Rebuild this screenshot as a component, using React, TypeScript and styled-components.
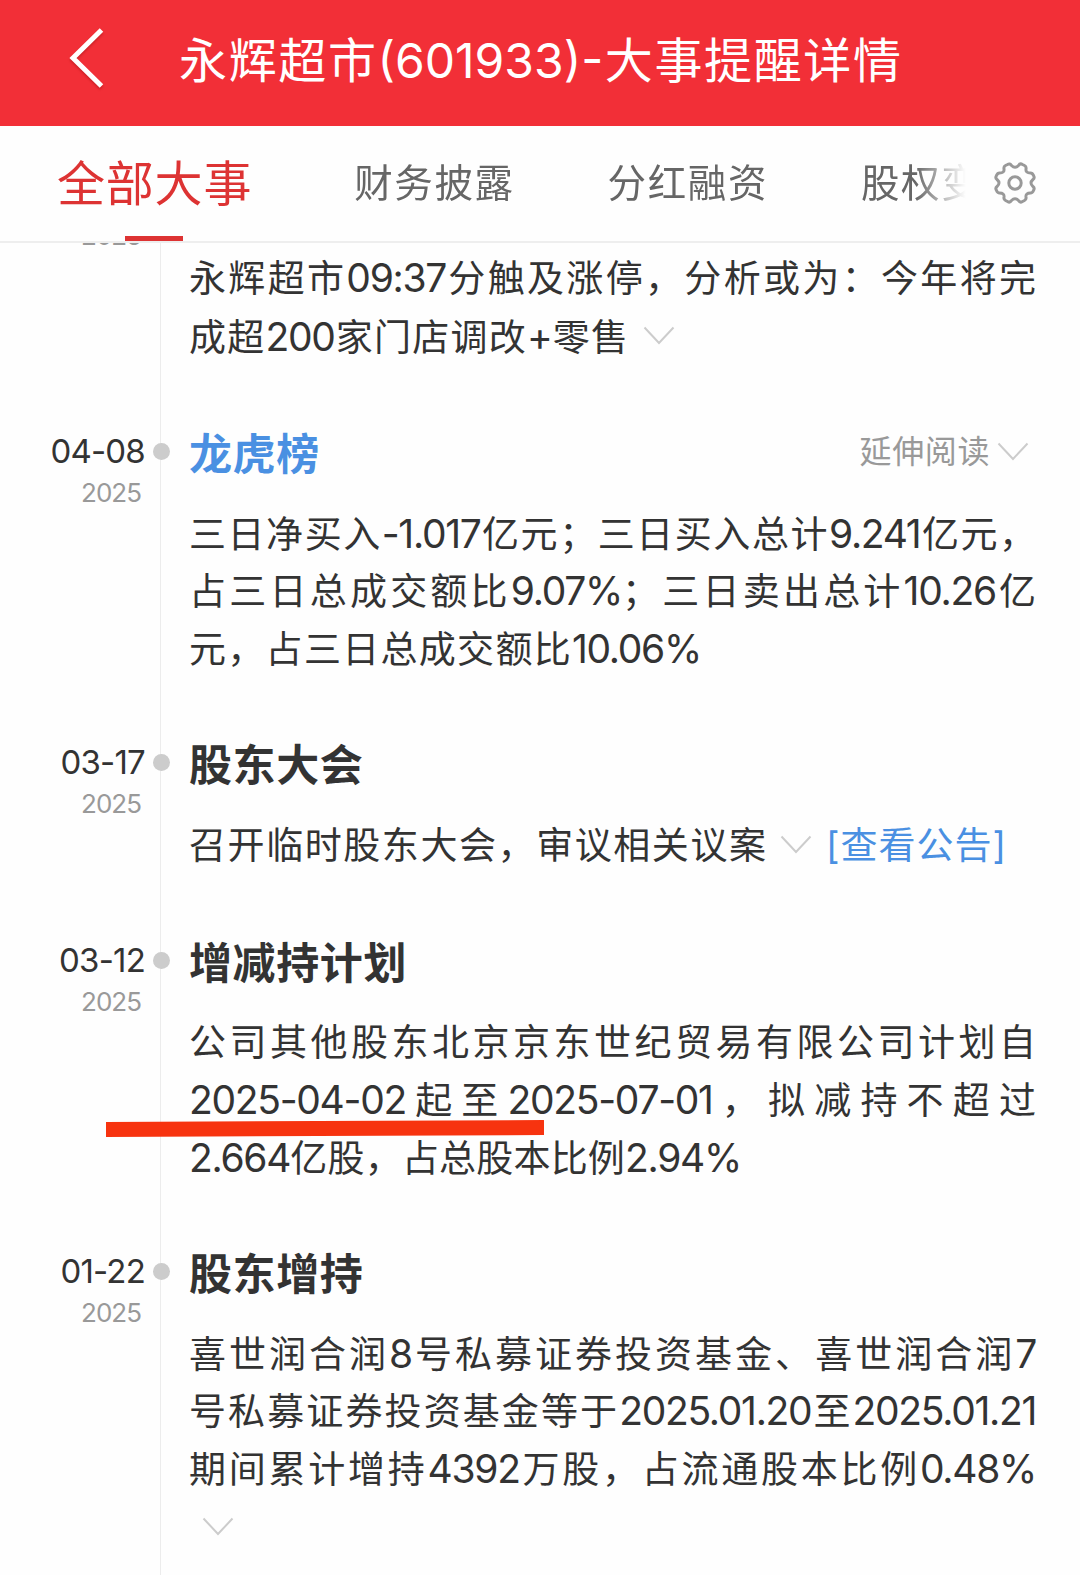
import React from "react";
import styled, { createGlobalStyle } from "styled-components";

const GlobalStyle = createGlobalStyle`
  * { box-sizing: border-box; }
  body { margin: 0; background: #fefefe; }
`;

const Screen = styled.div`
  width: 1080px;
  height: 1575px;
  display: flex;
  flex-direction: column;
  overflow: hidden;
  position: relative;
  background: #fefefe;
  color: #333;
  font-family: "Inter", "Noto Sans CJK SC", sans-serif;
`;

const Header = styled.header`
  height: 126px;
  flex: none;
  display: flex;
  align-items: center;
  padding: 0 0 8px 69px;
  background: #f22f37;
  color: #fff;
`;

const BackIcon = styled.svg`
  width: 36px;
  height: 62px;
  flex: none;
  margin-top: -3px;
  filter: drop-shadow(0 2px 1px rgba(120, 0, 0, 0.3));
`;

const HeaderTitle = styled.h1`
  margin: 4px 0 0 74px;
  width: 722px;
  font-size: 48px;
  font-weight: 400;
  line-height: 70px;
  white-space: nowrap;
  text-align-last: justify;
`;

const TabBar = styled.nav`
  height: 117px;
  flex: none;
  display: flex;
  align-items: stretch;
  border-bottom: 2px solid #eee;
`;

const TabStrip = styled.div`
  width: 966px;
  padding-left: 57px;
  display: flex;
  overflow: hidden;
  mask-image: linear-gradient(to right, #000 915px, transparent 966px);
`;

const Tab = styled.div<{ $active?: boolean; $gap: number }>`
  flex: none;
  display: flex;
  flex-direction: column;
  align-items: center;
  margin-right: ${(p) => p.$gap}px;
  font-size: ${(p) => (p.$active ? 48 : 38.5)}px;
  letter-spacing: ${(p) => (p.$active ? 0.8 : 1.6)}px;
  line-height: ${(p) => (p.$active ? 116 : 114)}px;
  color: ${(p) => (p.$active ? "#dd3333" : "#666")};
`;

const TabUnderline = styled.span`
  width: 58px;
  height: 5px;
  margin: -6px 2px 0 0;
  background: #dd3333;
`;

const SettingsIcon = styled.svg`
  width: 44px;
  height: 44px;
  margin: 35px 0 0 27px;
`;

const Timeline = styled.main`
  flex: 1;
  min-height: 0;
  overflow: hidden;
  display: flex;
  flex-direction: column;
`;

const Entry = styled.section`
  flex: none;
  display: grid;
  grid-template-columns: 145px 32px 1fr;

  &:last-child {
    flex: 1;
  }
`;

const DateColumn = styled.div<{ $shift?: number }>`
  display: flex;
  flex-direction: column;
  align-items: flex-end;
  margin-top: ${(p) => p.$shift ?? -1}px;
`;

const Day = styled.div`
  height: 56px;
  line-height: 56px;
  font-size: 33px;
  letter-spacing: -0.8px;
  white-space: nowrap;
`;

const Year = styled.div`
  height: 28px;
  line-height: 28px;
  padding-right: 4px;
  font-size: 26px;
  letter-spacing: -1px;
  color: #999;
`;

const Axis = styled.div`
  display: flex;
  justify-content: center;
  padding-top: 19px;
  background: linear-gradient(#ececec, #ececec) 15px 0 / 1px 100% no-repeat;
`;

const Dot = styled.span`
  width: 17px;
  height: 17px;
  border-radius: 50%;
  background: #ccc;
`;

const Body = styled.div<{ $first?: boolean }>`
  padding: ${(p) => (p.$first ? 5 : 0)}px 44px 58px 12px;
`;

const TitleRow = styled.div`
  height: 60px;
  margin-bottom: 20px;
  display: flex;
  align-items: center;
  justify-content: space-between;
`;

const Title = styled.h2<{ $link?: boolean }>`
  margin: 0;
  padding-top: 1px;
  font-size: 43px;
  font-weight: 700;
  letter-spacing: 0.6px;
  line-height: 60px;
  color: ${(p) => (p.$link ? "#4a90e2" : "#333")};
`;

const ReadMore = styled.div`
  display: flex;
  align-items: center;
  gap: 7px;
  padding: 0 7px 4px 0;
  font-size: 32px;
  letter-spacing: 0.6px;
  line-height: 54px;
  color: #999;
`;

const LineRow = styled.div<{ $tall?: boolean }>`
  height: ${(p) => (p.$tall ? 60 : 57.7)}px;
  display: flex;
  align-items: center;
`;

const LineText = styled.span<{ $width?: number }>`
  display: block;
  width: ${(p) => p.$width ?? 847}px;
  padding-top: 2px;
  font-size: 37px;
  line-height: 57px;
  white-space: nowrap;
  text-align: justify;
  text-align-last: justify;
`;

const Num = styled.span`
  font-size: 39px;
  letter-spacing: -1.3px;
`;

const NoticeLink = styled.span`
  margin-left: 14px;
  padding-top: 2px;
  font-size: 37px;
  line-height: 57px;
  letter-spacing: 1px;
  white-space: nowrap;
  color: #4a90e2;
`;

const ChevronIcon = styled.svg<{ $indent?: number }>`
  width: 32px;
  height: 20px;
  flex: none;
  margin-left: ${(p) => p.$indent ?? 0}px;
`;

const MarkerStroke = styled.div`
  position: absolute;
  left: 106px;
  top: 1121px;
  width: 438px;
  height: 15px;
  background: #f7330f;
  transform: rotate(-0.25deg);
`;

function Chevron({ indent }: { indent?: number }) {
  return (
    <ChevronIcon $indent={indent} viewBox="0 0 32 20">
      <path d="M1.5 1.5 L16 17 L30.5 1.5" fill="none" stroke="#ccc" strokeWidth="2" />
    </ChevronIcon>
  );
}

interface LineData {
  text: string;
  width?: number;
  chevron?: number;
  link?: string;
}

interface EntryData {
  day: string;
  title: string;
  isLink?: boolean;
  readMore?: boolean;
  lines: LineData[];
}

const headLines: LineData[] = [
  { text: "永辉超市09:37分触及涨停，分析或为：今年将完" },
  { text: "成超200家门店调改+零售", width: 439, chevron: 15 },
];

const entries: EntryData[] = [
  {
    day: "04-08",
    title: "龙虎榜",
    isLink: true,
    readMore: true,
    lines: [
      { text: "三日净买入-1.017亿元；三日买入总计9.241亿元，" },
      { text: "占三日总成交额比9.07%；三日卖出总计10.26亿" },
      { text: "元，占三日总成交额比10.06%", width: 512 },
    ],
  },
  {
    day: "03-17",
    title: "股东大会",
    lines: [
      { text: "召开临时股东大会，审议相关议案", width: 577, chevron: 14, link: "[查看公告]" },
    ],
  },
  {
    day: "03-12",
    title: "增减持计划",
    lines: [
      { text: "公司其他股东北京京东世纪贸易有限公司计划自" },
      { text: "2025-04-02起至2025-07-01，拟减持不超过" },
      { text: "2.664亿股，占总股本比例2.94%", width: 552 },
    ],
  },
  {
    day: "01-22",
    title: "股东增持",
    lines: [
      { text: "喜世润合润8号私募证券投资基金、喜世润合润7" },
      { text: "号私募证券投资基金等于2025.01.20至2025.01.21" },
      { text: "期间累计增持4392万股，占流通股本比例0.48%" },
      { text: "", width: 0, chevron: 13 },
    ],
  },
];

function Line({ line }: { line: LineData }) {
  const parts = line.text.split(/([0-9.:%+-]+)/).filter(Boolean);
  return (
    <LineRow $tall={line.chevron !== undefined}>
      <LineText $width={line.width}>
        {parts.map((part, i) => (/^[0-9.:%+-]/.test(part) ? <Num key={i}>{part}</Num> : part))}
      </LineText>
      {line.chevron !== undefined && <Chevron indent={line.chevron} />}
      {line.link && <NoticeLink>{line.link}</NoticeLink>}
    </LineRow>
  );
}

export default function App() {
  return (
    <Screen>
      <GlobalStyle />
      <Header>
        <BackIcon viewBox="0 0 36 62">
          <path d="M32.5 3 L4 31 L32.5 59" fill="none" stroke="#fff" strokeWidth="5" />
        </BackIcon>
        <HeaderTitle>永辉超市(601933)-大事提醒详情</HeaderTitle>
      </Header>
      <TabBar>
        <TabStrip>
          <Tab $active $gap={102}>
            全部大事
            <TabUnderline />
          </Tab>
          <Tab $gap={93}>财务披露</Tab>
          <Tab $gap={93}>分红融资</Tab>
          <Tab $gap={0}>股权变动</Tab>
        </TabStrip>
        <SettingsIcon viewBox="0 0 44 44" fill="none" stroke="#999" strokeWidth="3" strokeLinejoin="round">
          <path d="M14.5 3.5 Q17 2 18.5 4.5 Q22 8 25.5 4.5 Q27 2 29.5 3.5 L31.5 4.5 Q33.5 5.500 33 8 Q32.500 12 37.500 12 Q39.500 12 40.500 14.500 Q42 17 40 18.500 Q36 22 40 25.500 Q42 27 40.500 29.500 Q39.500 32 37.500 32 Q32.500 32 33 36 Q33.500 38.500 31.500 39.500 L29.500 40.500 Q27 42 25.500 39.500 Q22 36 18.500 39.500 Q17 42 14.500 40.500 L12.500 39.500 Q10.500 38.500 11 36 Q11.500 32 6.500 32 Q4.500 32 3.500 29.500 Q2 27 4 25.500 Q8 22 4 18.500 Q2 17 3.500 14.500 Q4.500 12 6.500 12 Q11.500 12 11 8 Q10.500 5.500 12.500 4.500 Z" />
          <circle cx="22" cy="22" r="6.200" />
        </SettingsIcon>
      </TabBar>
      <Timeline>
        <Entry>
          <DateColumn $shift={-21}>
            <Year>2025</Year>
          </DateColumn>
          <Axis />
          <Body $first>
            {headLines.map((line) => (
              <Line key={line.text} line={line} />
            ))}
          </Body>
        </Entry>
        {entries.map((entry) => (
          <Entry key={entry.day}>
            <DateColumn>
              <Day>{entry.day}</Day>
              <Year>2025</Year>
            </DateColumn>
            <Axis>
              <Dot />
            </Axis>
            <Body>
              <TitleRow>
                <Title $link={entry.isLink}>{entry.title}</Title>
                {entry.readMore && (
                  <ReadMore>
                    延伸阅读
                    <Chevron />
                  </ReadMore>
                )}
              </TitleRow>
              {entry.lines.map((line) => (
                <Line key={line.text} line={line} />
              ))}
            </Body>
          </Entry>
        ))}
      </Timeline>
      <MarkerStroke />
    </Screen>
  );
}
